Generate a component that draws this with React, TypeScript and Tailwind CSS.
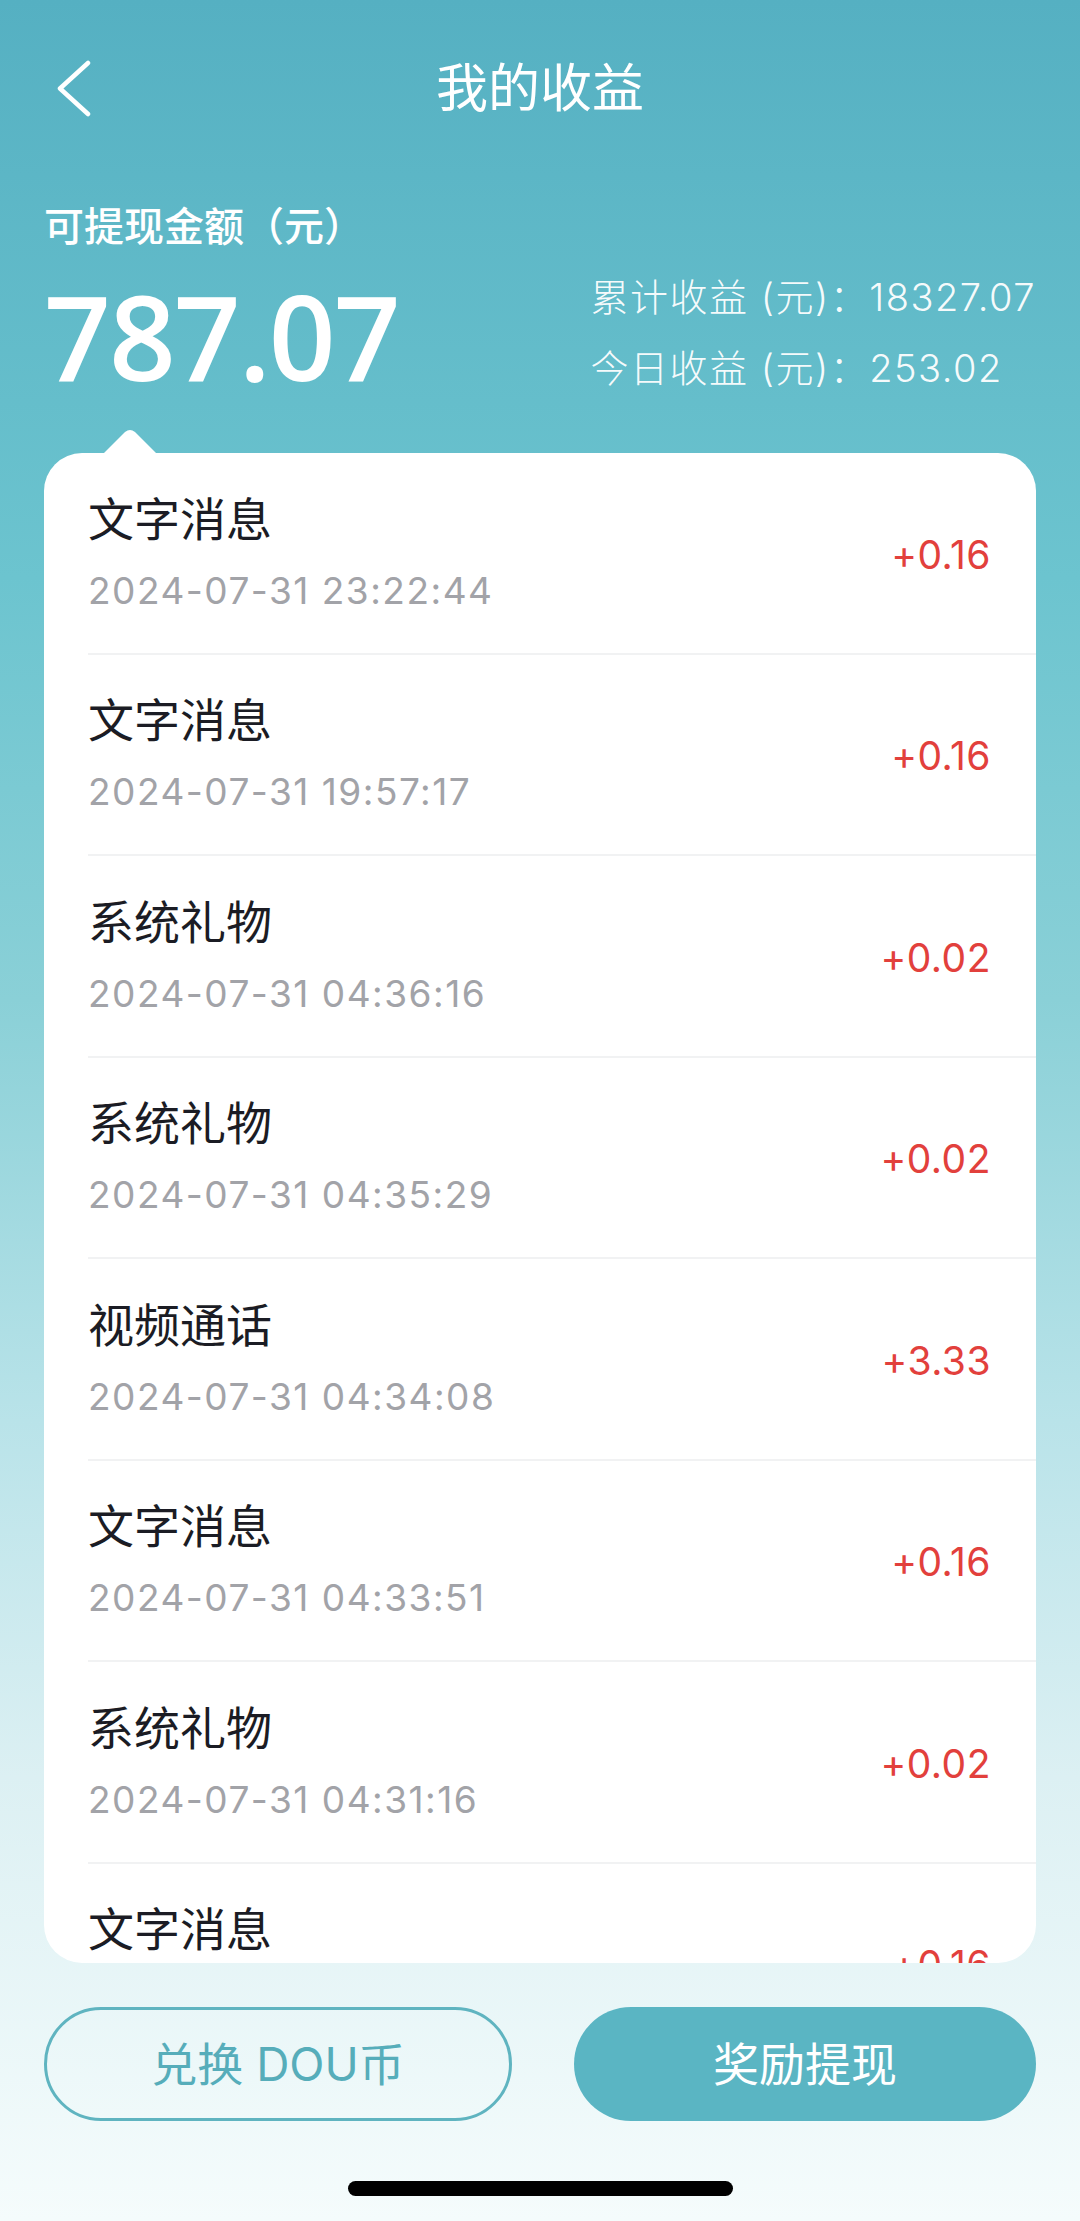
import { Fragment } from 'react'

const rows = [
  { title: '文字消息', time: '2024-07-31 23:22:44', amount: '+0.16' },
  { title: '文字消息', time: '2024-07-31 19:57:17', amount: '+0.16' },
  { title: '系统礼物', time: '2024-07-31 04:36:16', amount: '+0.02' },
  { title: '系统礼物', time: '2024-07-31 04:35:29', amount: '+0.02' },
  { title: '视频通话', time: '2024-07-31 04:34:08', amount: '+3.33' },
  { title: '文字消息', time: '2024-07-31 04:33:51', amount: '+0.16' },
  { title: '系统礼物', time: '2024-07-31 04:31:16', amount: '+0.02' },
  { title: '文字消息', time: '2024-07-31 04:30:02', amount: '+0.16' },
]

const font = "font-['Inter','Noto_Sans_CJK_SC',sans-serif]"

export default function App() {
  return (
    <div
      className={`${font} w-[1080px] h-[2221px] overflow-hidden flex flex-col bg-[linear-gradient(180deg,#55b0c2_0%,#6cc4cf_26%,#8ad0d7_45%,#b9e3e9_64%,#dcf0f3_80%,#f5fcfc_100%)]`}
    >
      {/* Nav bar */}
      <div className="relative h-[178px] flex items-center justify-center">
        <svg
          className="absolute left-[56px] top-[60px]"
          width="36"
          height="58"
          viewBox="0 0 36 58"
          fill="none"
        >
          <path
            d="M32 3 L4 28.5 L32 54"
            stroke="white"
            strokeWidth="4.5"
            strokeLinecap="round"
            strokeLinejoin="round"
          />
        </svg>
        <h1 className="text-[52px] leading-none text-white font-normal">我的收益</h1>
      </div>

      {/* Summary */}
      <div className="px-[44px] mt-[24px] flex justify-between items-start">
        <div className="flex flex-col">
          <div className="text-[40px] leading-[50px] font-medium text-white">可提现金额（元）</div>
          <div className="font-['Open_Sans',sans-serif] font-semibold text-[117px] leading-[140px] tracking-[-2px] text-white mt-[14px]">
            787.07
          </div>
        </div>
        <div className="flex flex-col text-[38px] leading-[50px] tracking-[1.5px] font-light text-white/95 mt-[70px]">
          <div>累计收益 (元)：18327.07</div>
          <div className="mt-[21px]">今日收益 (元)：253.02</div>
        </div>
      </div>

      {/* Record list card */}
      <div className="relative mx-[44px] mt-[47px] h-[1510px]">
        <svg
          className="absolute left-[58px] -top-[24px]"
          width="56"
          height="26"
          viewBox="0 0 56 26"
        >
          <path d="M0 26 L23 3 Q28 -1 33 3 L56 26 Z" fill="white" />
        </svg>
        <div className="h-full bg-white rounded-[38px] overflow-hidden">
          {rows.map((r, i) => (
            <Fragment key={i}>
              <div className="ml-[44px] h-[201.5px] border-b-2 border-[#f1f2f3] flex items-center justify-between pr-[45px]">
                <div className="flex flex-col">
                  <div className="text-[46px] leading-[56px] text-[#1b1c24]">{r.title}</div>
                  <div className="mt-[20px] text-[37px] leading-[48px] tracking-[1.5px] text-[#a2a3a8]">{r.time}</div>
                </div>
                <div className="text-[39px] leading-[50px] tracking-[0.5px] text-[#e2403c] mt-[4px]">{r.amount}</div>
              </div>
            </Fragment>
          ))}
        </div>
      </div>

      {/* Buttons */}
      <div className="px-[44px] mt-[44px] flex gap-[62px]">
        <button className="flex-1 h-[114px] rounded-full border-[3px] border-[#5fb4c0] text-[#56adba] text-[46px] flex items-center justify-center">
          兑换 DOU币
        </button>
        <button className="flex-1 h-[114px] rounded-full bg-[#5ab5c3] text-white text-[46px] flex items-center justify-center">
          奖励提现
        </button>
      </div>

      {/* Home indicator */}
      <div className="flex justify-center mt-[60px]">
        <div className="w-[385px] h-[15px] rounded-full bg-black" />
      </div>
    </div>
  )
}
